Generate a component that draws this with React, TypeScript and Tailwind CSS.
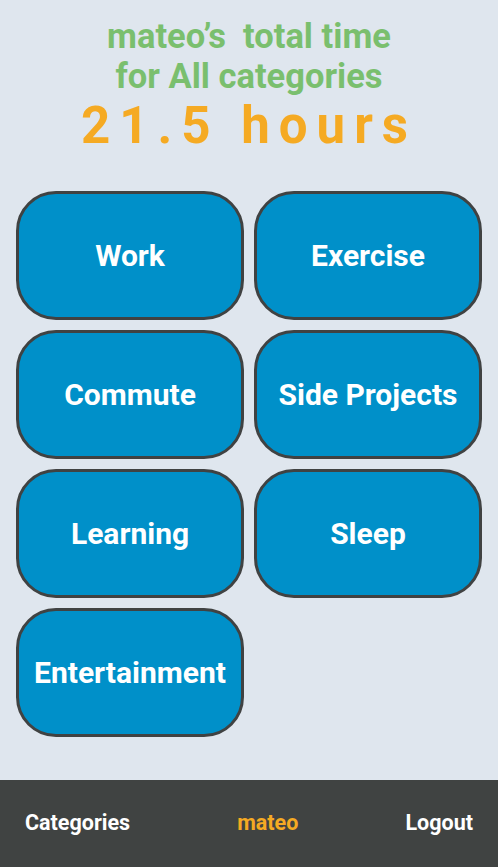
const categories = ["Work", "Exercise", "Commute", "Side Projects", "Learning", "Sleep", "Entertainment"];

export default function App() {
  return (
    <div className="flex min-h-[867px] flex-col bg-[#dfe6ee] font-['Roboto',sans-serif]">
      {/* Header */}
      <div className="flex flex-col items-center pt-[16px] text-center">
        <h1 className="text-[34.5px] font-bold leading-[40px] text-[#7abf6e]">
          mateo’s&nbsp; total time
          <br />
          for All categories
        </h1>
        <p className="mt-[-2px] text-[51px] font-bold leading-[64px] tracking-[9px] text-[#f5aa23]">
          21.5 hours
        </p>
      </div>

      {/* Category grid */}
      <div className="mt-[33px] grid grid-cols-2 gap-[10px] px-[16px]">
        {categories.map((c) => (
          <button
            key={c}
            className="h-[129px] rounded-[40px] border-[3px] border-[#404242] bg-[#0090c9] text-[30px] font-bold text-white"
          >
            {c}
          </button>
        ))}
      </div>

      <div className="flex-1" />

      {/* Footer nav */}
      <nav className="flex h-[87px] items-center justify-between bg-[#404342] px-[25px] text-[21.5px] font-bold">
        <button className="text-white">Categories</button>
        <button className="text-[#f5aa23]">mateo</button>
        <button className="text-white">Logout</button>
      </nav>
    </div>
  );
}
